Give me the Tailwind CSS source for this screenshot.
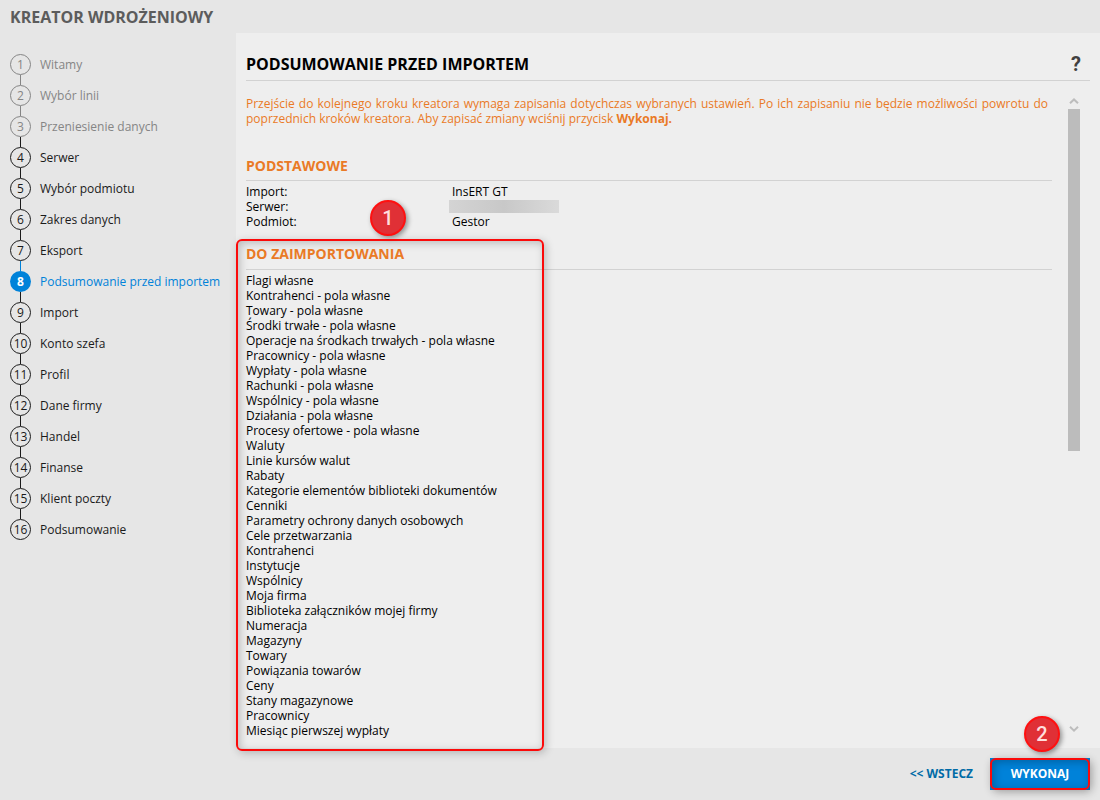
<!DOCTYPE html>
<html lang="pl">
<head>
    <meta charset="UTF-8">
    <meta name="viewport" content="width=device-width, initial-scale=1.0">
    <title>Kreator wdrożeniowy</title>
    <script src="https://cdn.jsdelivr.net/npm/@tailwindcss/browser@4"></script>
</head>
<body class="flex min-h-screen flex-col bg-[#e6e6e6] font-['Open_Sans','Noto_Sans',sans-serif] text-[12px] leading-[15px] text-black">
    <!-- Header -->
    <header class="flex h-[33px] items-center px-[10px]">
        <h1 class="text-[16px] leading-5 font-bold text-[#5c5c5c]">KREATOR WDROŻENIOWY</h1>
    </header>

    <div class="flex grow">
        <!-- Steps -->
        <nav class="w-[236px] shrink-0 pt-[21px] pl-[10px]">
            <ol>
                <li class="flex items-end gap-[9px] text-[#858585]">
                    <span class="flex size-[21px] items-center justify-center rounded-full border border-current">1</span>
                    <span class="leading-[21px]">Witamy</span>
                </li>
                <li class="flex items-end gap-[9px] text-[#858585]">
                    <span class="flex flex-col items-center"><span class="h-[10px] w-px bg-current"></span><span class="flex size-[21px] items-center justify-center rounded-full border border-current">2</span></span>
                    <span class="leading-[21px]">Wybór linii</span>
                </li>
                <li class="flex items-end gap-[9px] text-[#858585]">
                    <span class="flex flex-col items-center"><span class="h-[10px] w-px bg-current"></span><span class="flex size-[21px] items-center justify-center rounded-full border border-current">3</span></span>
                    <span class="leading-[21px]">Przeniesienie danych</span>
                </li>
                <li class="flex items-end gap-[9px] text-[#1a1a1a]">
                    <span class="flex flex-col items-center"><span class="h-[10px] w-px bg-current"></span><span class="flex size-[21px] items-center justify-center rounded-full border border-current">4</span></span>
                    <span class="leading-[21px]">Serwer</span>
                </li>
                <li class="flex items-end gap-[9px] text-[#1a1a1a]">
                    <span class="flex flex-col items-center"><span class="h-[10px] w-px bg-current"></span><span class="flex size-[21px] items-center justify-center rounded-full border border-current">5</span></span>
                    <span class="leading-[21px]">Wybór podmiotu</span>
                </li>
                <li class="flex items-end gap-[9px] text-[#1a1a1a]">
                    <span class="flex flex-col items-center"><span class="h-[10px] w-px bg-current"></span><span class="flex size-[21px] items-center justify-center rounded-full border border-current">6</span></span>
                    <span class="leading-[21px]">Zakres danych</span>
                </li>
                <li class="flex items-end gap-[9px] text-[#1a1a1a]">
                    <span class="flex flex-col items-center"><span class="h-[10px] w-px bg-current"></span><span class="flex size-[21px] items-center justify-center rounded-full border border-current">7</span></span>
                    <span class="leading-[21px]">Eksport</span>
                </li>
                <li class="flex items-end gap-[9px] text-[#0082d9]" aria-current="step">
                    <span class="flex flex-col items-center"><span class="h-[10px] w-px bg-current"></span><span class="flex size-[21px] items-center justify-center rounded-full bg-[#0082d9] font-bold text-white">8</span></span>
                    <span class="leading-[21px]">Podsumowanie przed importem</span>
                </li>
                <li class="flex items-end gap-[9px] text-[#1a1a1a]">
                    <span class="flex flex-col items-center"><span class="h-[10px] w-px bg-current"></span><span class="flex size-[21px] items-center justify-center rounded-full border border-current">9</span></span>
                    <span class="leading-[21px]">Import</span>
                </li>
                <li class="flex items-end gap-[9px] text-[#1a1a1a]">
                    <span class="flex flex-col items-center"><span class="h-[10px] w-px bg-current"></span><span class="flex size-[21px] items-center justify-center rounded-full border border-current">10</span></span>
                    <span class="leading-[21px]">Konto szefa</span>
                </li>
                <li class="flex items-end gap-[9px] text-[#1a1a1a]">
                    <span class="flex flex-col items-center"><span class="h-[10px] w-px bg-current"></span><span class="flex size-[21px] items-center justify-center rounded-full border border-current">11</span></span>
                    <span class="leading-[21px]">Profil</span>
                </li>
                <li class="flex items-end gap-[9px] text-[#1a1a1a]">
                    <span class="flex flex-col items-center"><span class="h-[10px] w-px bg-current"></span><span class="flex size-[21px] items-center justify-center rounded-full border border-current">12</span></span>
                    <span class="leading-[21px]">Dane firmy</span>
                </li>
                <li class="flex items-end gap-[9px] text-[#1a1a1a]">
                    <span class="flex flex-col items-center"><span class="h-[10px] w-px bg-current"></span><span class="flex size-[21px] items-center justify-center rounded-full border border-current">13</span></span>
                    <span class="leading-[21px]">Handel</span>
                </li>
                <li class="flex items-end gap-[9px] text-[#1a1a1a]">
                    <span class="flex flex-col items-center"><span class="h-[10px] w-px bg-current"></span><span class="flex size-[21px] items-center justify-center rounded-full border border-current">14</span></span>
                    <span class="leading-[21px]">Finanse</span>
                </li>
                <li class="flex items-end gap-[9px] text-[#1a1a1a]">
                    <span class="flex flex-col items-center"><span class="h-[10px] w-px bg-current"></span><span class="flex size-[21px] items-center justify-center rounded-full border border-current">15</span></span>
                    <span class="leading-[21px]">Klient poczty</span>
                </li>
                <li class="flex items-end gap-[9px] text-[#1a1a1a]">
                    <span class="flex flex-col items-center"><span class="h-[10px] w-px bg-current"></span><span class="flex size-[21px] items-center justify-center rounded-full border border-current">16</span></span>
                    <span class="leading-[21px]">Podsumowanie</span>
                </li>
            </ol>
        </nav>

        <!-- Main panel -->
        <main class="flex grow flex-col bg-[#eeeeee] px-[10px]">
            <div class="flex h-12 items-end justify-between border-b border-[#d2d2d2] pb-[6px]">
                <h2 class="text-[16px] leading-5 font-bold">PODSUMOWANIE PRZED IMPORTEM</h2>
                <button type="button" aria-label="Pomoc" class="w-7 font-['Roboto',sans-serif] text-[20px] leading-5 font-bold text-[#404040]">?</button>
            </div>

            <div class="flex grow">
                <div class="grow pt-[15px] pb-[9px]">
                    <p class="mr-1 text-justify text-[#ea7a26]">Przejście do kolejnego kroku kreatora wymaga zapisania dotychczas wybranych ustawień. Po ich zapisaniu nie będzie możliwości powrotu do poprzednich kroków kreatora. Aby zapisać zmiany wciśnij przycisk <b>Wykonaj.</b></p>

                    <section class="relative pt-[30px]">
                        <h3 class="border-b border-[#d2d2d2] pb-1 text-[14px] leading-5 font-bold text-[#ea7a26]">PODSTAWOWE</h3>
                        <dl class="grid grid-cols-[206px_1fr] pt-[3px]">
                            <dt>Import:</dt>
                            <dd>InsERT GT</dd>
                            <dt>Serwer:</dt>
                            <dd class="-ml-[3px] flex items-center"><span class="h-[13px] w-[110px] bg-linear-to-r from-[#d4d4d4] via-[#c8c8c8] to-[#dadada]"></span></dd>
                            <dt>Podmiot:</dt>
                            <dd>Gestor</dd>
                        </dl>
                        <span class="absolute -bottom-[7px] left-[124px] flex size-9 items-center justify-center rounded-full border-2 border-[#ff1010] bg-[#e03036] font-['Roboto',sans-serif] text-[20px] font-medium text-[#ffdede] shadow-[2px_2px_5px_rgba(0,0,0,0.4)]">1</span>
                    </section>

                    <section class="relative pt-[15px]">
                        <h3 class="border-b border-[#d2d2d2] pb-[5px] text-[14px] leading-5 font-bold text-[#ea7a26]">DO ZAIMPORTOWANIA</h3>
                        <ul class="pt-[3px]">
                            <li>Flagi własne</li>
                            <li>Kontrahenci - pola własne</li>
                            <li>Towary - pola własne</li>
                            <li>Środki trwałe - pola własne</li>
                            <li>Operacje na środkach trwałych - pola własne</li>
                            <li>Pracownicy - pola własne</li>
                            <li>Wypłaty - pola własne</li>
                            <li>Rachunki - pola własne</li>
                            <li>Wspólnicy - pola własne</li>
                            <li>Działania - pola własne</li>
                            <li>Procesy ofertowe - pola własne</li>
                            <li>Waluty</li>
                            <li>Linie kursów walut</li>
                            <li>Rabaty</li>
                            <li>Kategorie elementów biblioteki dokumentów</li>
                            <li>Cenniki</li>
                            <li>Parametry ochrony danych osobowych</li>
                            <li>Cele przetwarzania</li>
                            <li>Kontrahenci</li>
                            <li>Instytucje</li>
                            <li>Wspólnicy</li>
                            <li>Moja firma</li>
                            <li>Biblioteka załączników mojej firmy</li>
                            <li>Numeracja</li>
                            <li>Magazyny</li>
                            <li>Towary</li>
                            <li>Powiązania towarów</li>
                            <li>Ceny</li>
                            <li>Stany magazynowe</li>
                            <li>Pracownicy</li>
                            <li>Miesiąc pierwszej wypłaty</li>
                        </ul>
                        <!-- Highlight frame -->
                        <div class="pointer-events-none absolute top-[10px] -bottom-[13px] -left-[10px] w-[308px] rounded-md border-2 border-[#fb0a0a] shadow-[2px_2px_8px_rgba(0,0,0,0.22),inset_2px_2px_8px_rgba(0,0,0,0.22)]"></div>
                    </section>
                </div>

                <!-- Scrollbar -->
                <div class="mr-[10px] ml-4 flex w-3 shrink-0 flex-col pt-[11px] pb-3">
                    <button type="button" aria-label="Przewiń w górę" class="flex h-[17px] items-center justify-center">
                        <svg class="h-[6px] w-[10px]" viewBox="0 0 10 6" fill="none" stroke="#bdbdbd" stroke-width="2"><path d="M1 5.2 5 1.4l4 3.8"/></svg>
                    </button>
                    <div class="grow">
                        <div class="h-[342px] bg-[#bcbcbc]"></div>
                    </div>
                    <button type="button" aria-label="Przewiń w dół" class="flex h-[15px] items-center justify-center">
                        <svg class="h-[6px] w-[10px]" viewBox="0 0 10 6" fill="none" stroke="#bdbdbd" stroke-width="2"><path d="M1 .8l4 3.8 4-3.8"/></svg>
                    </button>
                </div>
            </div>
        </main>
    </div>

    <!-- Footer -->
    <footer class="relative flex h-[52px] items-center justify-end gap-[17px] pr-[10px]">
        <button type="button" class="h-8 pb-[2px] font-bold text-[#006ba6]">&lt;&lt; WSTECZ</button>
        <div class="relative">
            <button type="button" class="block h-8 w-[100px] bg-[#0082d9] pb-[2px] font-bold text-white">WYKONAJ</button>
            <div class="pointer-events-none absolute inset-0 rounded-md border-2 border-[#fb0a0a] shadow-[2px_2px_8px_rgba(0,0,0,0.3),inset_2px_2px_8px_rgba(0,0,0,0.25)]"></div>
            <span class="absolute bottom-[38px] left-[34px] flex size-9 items-center justify-center rounded-full border-2 border-[#ff1010] bg-[#e03036] font-['Roboto',sans-serif] text-[20px] font-medium text-[#ffdede] shadow-[2px_2px_5px_rgba(0,0,0,0.4)]">2</span>
        </div>
    </footer>
</body>
</html>
